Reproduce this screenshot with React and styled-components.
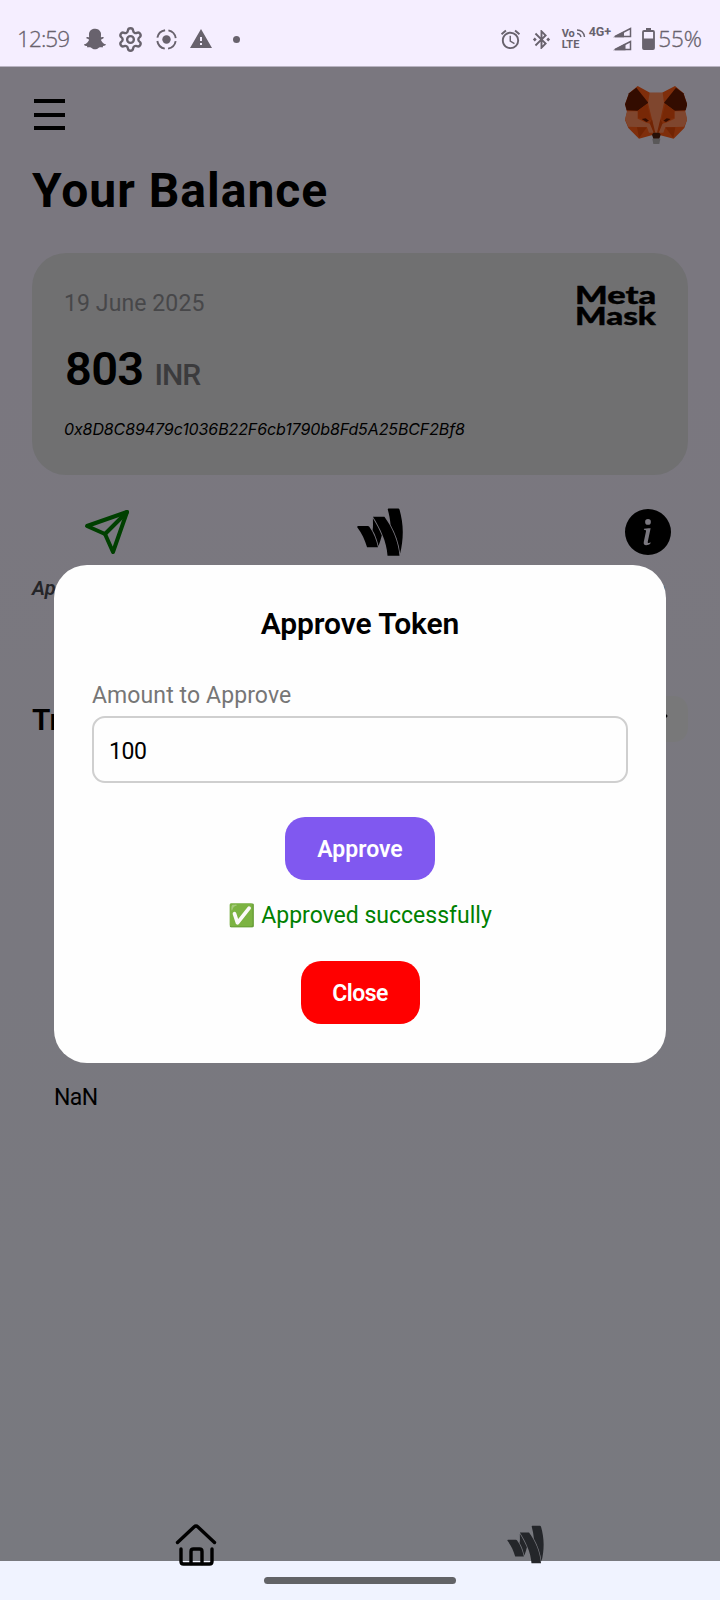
import React from "react";
import styled, { createGlobalStyle } from "styled-components";
import { FiSend } from "react-icons/fi";
import { FaGoogleWallet, FaSnapchatGhost } from "react-icons/fa";
import { BsInfoCircleFill } from "react-icons/bs";
import { MdAlarm, MdBluetoothConnected, MdWarning } from "react-icons/md";
import { Settings, ChevronRight } from "lucide-react";

const Global = createGlobalStyle`
  * { box-sizing: border-box; }
  body { margin: 0; font-family: Roboto, "Liberation Sans", sans-serif; color: #000; }
  svg { display: block; flex: none; }
`;

const Phone = styled.div`
  display: flex;
  flex-direction: column;
  width: 720px;
  height: 1600px;
  overflow: hidden;
`;

const StatusBar = styled.header`
  display: flex;
  justify-content: space-between;
  height: 67px;
  padding: 11px 18px 0 17px;
  background: #f5eeff;
  border-bottom: 1px solid #b9b3c2;
  color: #68626d;
`;

const StatusGroup = styled.div`
  display: flex;
  align-items: center;
  height: 56px;
`;

const StatusText = styled.span`
  font: 300 22.5px/30px "Open Sans", "Noto Sans", sans-serif;
  letter-spacing: ${(p) => p.$spacing || 0}px;
  -webkit-text-stroke: 0.3px currentColor;
`;

const StatusIcon = styled.span`
  display: flex;
  margin-left: ${(p) => p.$gap}px;
`;

const Volte = styled.span`
  display: flex;
  flex-direction: column;
  margin-left: 9px;
  width: 23px;
  font: 700 11px/11px Roboto, sans-serif;
`;

const VolteTop = styled.span`
  display: flex;
  gap: 1px;
`;

const Network = styled.span`
  align-self: flex-start;
  margin: 13px 0 0 4px;
  font: 700 12.5px/16px Roboto, sans-serif;
`;

const Screen = styled.main`
  position: relative;
  display: flex;
  flex-direction: column;
  height: 1494px;
  padding: 0 32px;
  background: linear-gradient(#f5eeff, #f3f1ff 60%, #f1f3ff);
`;

const TopBar = styled.div`
  display: flex;
  justify-content: space-between;
  height: 94px;
  padding: 19px 1px 0 2px;
`;

const MenuButton = styled.div`
  display: flex;
  flex-direction: column;
  gap: 9.5px;
  width: 31px;
  padding-top: 13px;
`;

const MenuLine = styled.span`
  height: 4px;
  background: #000;
`;

const Title = styled.h1`
  margin: 0;
  height: 60px;
  font-size: 48px;
  line-height: 60px;
  font-weight: 700;
  letter-spacing: 1px;
`;

const Card = styled.section`
  display: flex;
  justify-content: space-between;
  height: 222px;
  margin-top: 32px;
  padding: 32px;
  border-radius: 34px;
  background: #e0e0e3;
`;

const CardInfo = styled.div`
  display: flex;
  flex-direction: column;
`;

const CardDate = styled.span`
  height: 36px;
  font-size: 23px;
  line-height: 37px;
  letter-spacing: 0.1px;
  color: #8f8f93;
`;

const Amount = styled.div`
  display: flex;
  align-items: baseline;
  gap: 11px;
  height: 60px;
  margin-top: 18px;
  padding-left: 1px;
  font-size: 47px;
  line-height: 60px;
  font-weight: 600;
  letter-spacing: -0.7px;
`;

const Currency = styled.span`
  font-size: 30px;
  font-weight: 500;
  letter-spacing: -1px;
  color: #77777a;
`;

const Address = styled.span`
  height: 24px;
  margin-top: 18px;
  font: italic 400 16px/24px Inter, sans-serif;
  letter-spacing: -0.1px;
`;

const Actions = styled.div`
  display: flex;
  justify-content: space-between;
  align-items: center;
  height: 54px;
  margin-top: 30px;
  padding: 0 17px 0 51px;
`;

const ActionIcon = styled.span`
  display: flex;
  margin: 0 0 0 ${(p) => p.$shift || 0}px;
`;

const Labels = styled.div`
  display: flex;
  justify-content: space-between;
  height: 30px;
  margin-top: 14px;
  padding-right: 23px;
  font-size: 20px;
  line-height: 30px;
  font-weight: 600;
  font-style: italic;
  color: #4a4a50;
`;

const ListHeader = styled.div`
  display: flex;
  justify-content: space-between;
  align-items: center;
  height: 48px;
  margin-top: 92px;
`;

const ListTitle = styled.h2`
  margin: 0;
  font-size: 30px;
  font-weight: 600;
`;

const Pill = styled.div`
  display: flex;
  align-items: center;
  height: 46px;
  padding: 0 17px 6px 14px;
  border-radius: 14px;
  background: #f1f0f3;
`;

const Value = styled.span`
  height: 30px;
  margin: 340px 0 0 22px;
  font-size: 23px;
  line-height: 30px;
  letter-spacing: -0.6px;
`;

const Overlay = styled.div`
  position: absolute;
  inset: 0;
  display: flex;
  flex-direction: column;
  align-items: center;
  background: rgba(0, 0, 0, 0.5);
`;

const Modal = styled.div`
  display: flex;
  flex-direction: column;
  align-items: center;
  width: 612px;
  height: 498px;
  margin-top: 498px;
  padding: 39px 38px 0;
  border-radius: 33px;
  background: #fefefe;
`;

const ModalTitle = styled.h3`
  margin: 0;
  height: 40px;
  font-size: 30px;
  line-height: 40px;
  font-weight: 600;
  letter-spacing: -0.1px;
`;

const Label = styled.label`
  align-self: flex-start;
  height: 30px;
  margin-top: 37px;
  font-size: 23px;
  line-height: 30px;
  letter-spacing: 0.1px;
  color: #767676;
`;

const Field = styled.div`
  align-self: stretch;
  display: flex;
  align-items: center;
  height: 67px;
  margin-top: 5px;
  padding: 3px 0 0 15px;
  border: 2px solid #cfcfcf;
  border-radius: 13px;
  font-size: 23px;
  letter-spacing: -0.4px;
`;

const Button = styled.button`
  height: 63px;
  width: ${(p) => p.$width}px;
  margin: ${(p) => p.$top}px 0 0;
  padding: 2px 0 0;
  border: 0;
  border-radius: 20px;
  background: ${(p) => p.$color};
  color: #fff;
  font: 600 23px/61px Roboto, sans-serif;
  letter-spacing: ${(p) => p.$spacing || 0}px;
`;

const Message = styled.p`
  display: flex;
  align-items: center;
  gap: 6px;
  height: 30px;
  margin: 21px 0 0;
  font-size: 23px;
  line-height: 30px;
  color: #008000;
`;

const Emoji = styled.span`
  width: 27px;
  font-size: 22px;
`;

const Nav = styled.nav`
  position: absolute;
  left: 0;
  right: 0;
  bottom: -5px;
  display: flex;
  justify-content: space-between;
  align-items: center;
  height: 44px;
  padding: 0 173px 0 174px;
  color: #24262a;
`;

const GestureBar = styled.footer`
  display: flex;
  justify-content: center;
  height: 39px;
  padding-top: 16px;
  background: #f0f3ff;
`;

const Handle = styled.div`
  width: 192px;
  height: 7px;
  border-radius: 4px;
  background: #626367;
`;

const Fox = () => (
  <svg width="62" height="58" viewBox="0 0 186 174">
    <path fill="#FF5C16" d="M38 0L75 20H111L150 0L176 22L186 55L180 78L186 102L178 126L146 158L106 148H80L42 158L10 126L0 102L6 78L0 55L12 22Z" />
    <g id="half">
      <path fill="#661800" d="M34 5L70 50L38 74L5 73L0 55L12 22Z" />
      <path fill="#F0500C" d="M38 74L66 54L78 102L38 96Z" />
      <path fill="#661800" d="M50 99L62 97L72 104L64 108Z" />
      <path fill="#FF8D5D" d="M6 76H38V98L64 110L78 114L86 140H72L66 124L10 122L0 100Z" />
      <path fill="#E34807" d="M36 124H66L42 156Z" />
    </g>
    <use href="#half" transform="translate(187 0) scale(-1 1)" />
    <path fill="#FF8D5D" d="M74 20H113L117 50L106 100L100 142H87L81 100L69 50Z" />
    <path fill="#E34807" d="M81 100L91 140H86L74 112ZM106 100L96 140H101L113 112Z" />
    <path fill="#51200f" d="M85 140H103L107 146L103 158H85L81 146Z" />
    <path fill="#b5b0b2" d="M82 158H106L103 174H85Z" />
  </svg>
);

const LogoSvg = styled.svg`
  overflow: visible;
`;

const LogoText = styled.text`
  font: 900 25px Lato, Inter, sans-serif;
`;

const MetaMaskLogo = () => (
  <LogoSvg width="80" height="42" viewBox="0 0 80 42" stroke="#000" strokeWidth="0.4">
    <LogoText x="-1" y="19" textLength="81" lengthAdjust="spacingAndGlyphs">Meta</LogoText>
    <LogoText x="-1" y="39.500" textLength="81" lengthAdjust="spacingAndGlyphs">Mask</LogoText>
  </LogoSvg>
);

const RecordIcon = () => (
  <svg width="21" height="21" viewBox="0 0 21 21">
    <circle cx="10.5" cy="10.5" r="9.3" fill="none" stroke="currentColor" strokeWidth="1.9" strokeDasharray="11.2 3.4" strokeDashoffset="-1.7" />
    <circle cx="10.5" cy="10.5" r="4.2" fill="currentColor" />
  </svg>
);

const WaveIcon = () => (
  <svg width="10" height="10" viewBox="0 0 10 10" fill="none" stroke="currentColor" strokeWidth="1.4">
    <path d="M1 2Q7.500 2 8.500 9M1 5.500Q4 5.500 5 9" />
  </svg>
);

const SignalIcon = () => (
  <svg width="20" height="24" viewBox="0 0 20 24" fill="none" stroke="currentColor" strokeWidth="1.5">
    <path d="M3 9.500L18.500 1.500V9.500Z" />
    <path fill="currentColor" stroke="none" d="M1 10.200L12 4.500V10.200Z" />
    <path d="M3 22.500L18.500 14.500V22.500Z" />
    <path fill="currentColor" stroke="none" d="M1 23.200L13.500 16.500V23.200Z" />
  </svg>
);

const BatteryIcon = () => (
  <svg width="13" height="22" viewBox="0 0 13 22">
    <path fill="currentColor" d="M4 0h5v2.500H4z" />
    <rect x="1" y="3" width="11" height="18" rx="1" fill="none" stroke="currentColor" strokeWidth="1.8" />
    <path fill="currentColor" d="M1 10.500h11V21H1z" />
  </svg>
);

const HomeIcon = () => (
  <svg width="44" height="44" viewBox="0 0 44 44" fill="none" stroke="#000" strokeWidth="3.400" strokeLinecap="round" strokeLinejoin="round">
    <path d="M3.500 20.500L20 5Q22 3.200 24 5L40.500 20.500" />
    <path d="M7 27V39.500Q7 42 9.500 42H35.500Q38 42 38 39.500V27" />
    <path d="M17 41.500V29.500Q17 27 19.500 27H25.500Q28 27 28 29.500V41.500" />
  </svg>
);

export default function App() {
  return (
    <Phone>
      <Global />
      <StatusBar>
        <StatusGroup>
          <StatusText $spacing={-0.9}>12:59</StatusText>
          <StatusIcon $gap={15}><FaSnapchatGhost size={22} /></StatusIcon>
          <StatusIcon $gap={11}><Settings size={27} strokeWidth={2.1} /></StatusIcon>
          <StatusIcon $gap={12}><RecordIcon /></StatusIcon>
          <StatusIcon $gap={12}><MdWarning size={24} /></StatusIcon>
          <StatusIcon $gap={20}>
            <svg width="7" height="7"><circle cx="3.500" cy="3.500" r="3.500" fill="currentColor" /></svg>
          </StatusIcon>
        </StatusGroup>
        <StatusGroup>
          <MdAlarm size={23} />
          <StatusIcon $gap={8}><MdBluetoothConnected size={23} /></StatusIcon>
          <Volte>
            <VolteTop>Vo<WaveIcon /></VolteTop>
            <span>LTE</span>
          </Volte>
          <Network>4G+</Network>
          <StatusIcon $gap={1}><SignalIcon /></StatusIcon>
          <StatusIcon $gap={10}><BatteryIcon /></StatusIcon>
          <StatusIcon $gap={3}><StatusText>55%</StatusText></StatusIcon>
        </StatusGroup>
      </StatusBar>
      <Screen>
        <TopBar>
          <MenuButton><MenuLine /><MenuLine /><MenuLine /></MenuButton>
          <Fox />
        </TopBar>
        <Title>Your Balance</Title>
        <Card>
          <CardInfo>
            <CardDate>19 June 2025</CardDate>
            <Amount>803 <Currency>INR</Currency></Amount>
            <Address>0x8D8C89479c1036B22F6cb1790b8Fd5A25BCF2Bf8</Address>
          </CardInfo>
          <MetaMaskLogo />
        </Card>
        <Actions>
          <ActionIcon><FiSend size={48} color="#008000" /></ActionIcon>
          <ActionIcon $shift={3}><FaGoogleWallet size={54} /></ActionIcon>
          <ActionIcon><BsInfoCircleFill size={46} /></ActionIcon>
        </Actions>
        <Labels><span>Approve</span><span>Info</span></Labels>
        <ListHeader>
          <ListTitle>Transactions</ListTitle>
          <Pill><ChevronRight size={12} strokeWidth={4} /></Pill>
        </ListHeader>
        <Value>NaN</Value>
        <Overlay>
          <Modal>
            <ModalTitle>Approve Token</ModalTitle>
            <Label>Amount to Approve</Label>
            <Field>100</Field>
            <Button $width={150} $top={34} $color="#8058f0">Approve</Button>
            <Message><Emoji>✅</Emoji>Approved successfully</Message>
            <Button $width={119} $top={30} $color="#ff0000" $spacing={-0.5}>Close</Button>
          </Modal>
        </Overlay>
        <Nav>
          <HomeIcon />
          <FaGoogleWallet size={43} />
        </Nav>
      </Screen>
      <GestureBar><Handle /></GestureBar>
    </Phone>
  );
}
